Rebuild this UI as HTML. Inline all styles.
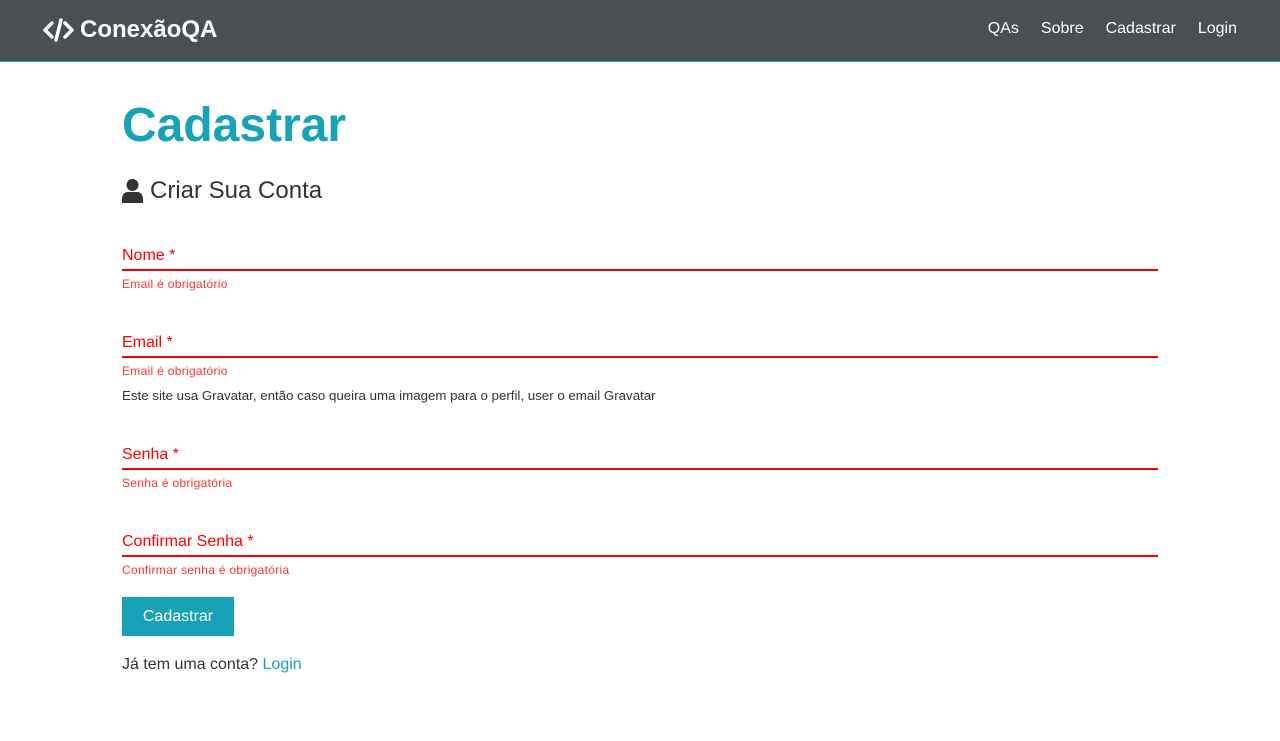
<!DOCTYPE html>
<html><head><meta charset="utf-8"><style>
*{margin:0;padding:0;box-sizing:border-box}
body{width:1280px;height:741px;background:#fff;font-family:"Liberation Sans",Arial,sans-serif;position:relative;overflow:hidden;color:#333}
.nav{position:absolute;left:0;top:0;width:1280px;height:62px;background:#4a4f54;border-bottom:1px solid #17a2b8}
.logo{position:absolute;left:43px;top:16px;color:#fff;font-weight:bold;font-size:24px;display:flex;align-items:center}
.logo svg{margin-right:6px}
.links{position:absolute;right:43px;top:20px;color:#fff;font-size:16px}
.links span{margin-left:22px}
.abs{position:absolute;left:122px}
h1{position:absolute;left:122px;top:98px;font-size:48px;color:#17a2b8;font-weight:bold}
.sub{top:177px;font-size:24px;color:#333;display:flex;align-items:center}
.lab{font-size:16px;color:#f00;width:1036px;border-bottom:2px solid #f00;padding-bottom:4px}
.err{font-size:12px;color:#f33;letter-spacing:.3px}
.btn{top:597px;width:112px;height:39px;background:#17a2b8;color:#fff;font-size:16px;text-align:center;line-height:39px}
</style></head><body>
<div class="nav">
<div class="logo"><svg width="31" height="24" viewBox="0 0 31 24"><path d="M9 5 L2 12 L9 19" stroke="#fff" stroke-width="3.5" fill="none" stroke-linecap="round" stroke-linejoin="round"/><path d="M22 5 L29 12 L22 19" stroke="#fff" stroke-width="3.5" fill="none" stroke-linecap="round" stroke-linejoin="round"/><path d="M18 2 L13 22" stroke="#fff" stroke-width="3.5" stroke-linecap="round"/></svg>ConexãoQA</div>
<div class="links"><span>QAs</span><span>Sobre</span><span>Cadastrar</span><span>Login</span></div>
</div>
<h1>Cadastrar</h1>
<div class="abs sub"><svg width="21" height="24" viewBox="0 0 21 24" style="margin-right:7px"><circle cx="10.5" cy="6" r="6" fill="#333"/><path d="M0 21 Q0 13 6 13 L15 13 Q21 13 21 21 L21 24 L0 24Z" fill="#333"/></svg>Criar Sua Conta</div>
<div class="abs lab" style="top:247px">Nome *</div>
<div class="abs err" style="top:277px">Email é obrigatório</div>
<div class="abs lab" style="top:334px">Email *</div>
<div class="abs err" style="top:364px">Email é obrigatório</div>
<div class="abs" style="top:388px;font-size:13.3px;color:#333">Este site usa Gravatar, então caso queira uma imagem para o perfil, user o email Gravatar</div>
<div class="abs lab" style="top:446px">Senha *</div>
<div class="abs err" style="top:476px">Senha é obrigatória</div>
<div class="abs lab" style="top:533px">Confirmar Senha *</div>
<div class="abs err" style="top:563px">Confirmar senha é obrigatória</div>
<div class="abs btn">Cadastrar</div>
<div class="abs" style="top:656px;font-size:16px;color:#333">Já tem uma conta? <span style="color:#17a2b8">Login</span></div>
</body></html>
